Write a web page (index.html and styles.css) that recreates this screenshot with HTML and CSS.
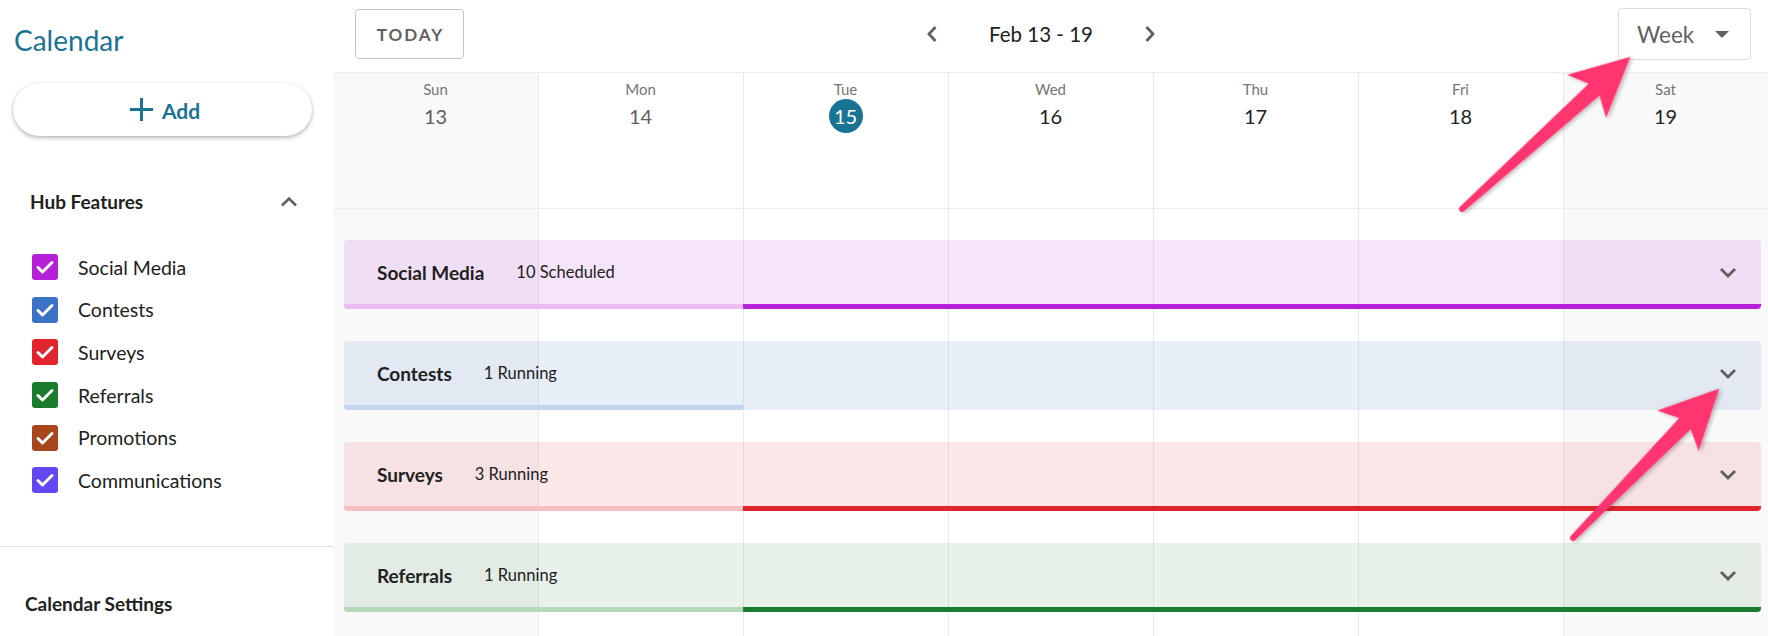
FILE: index.html
```html
<!DOCTYPE html>
<html lang="en">
<head>
<meta charset="utf-8">
<title>Calendar</title>
<link rel="stylesheet" href="styles.css">
</head>
<body>
<div class="app">
  <aside class="sidebar">
    <h1 class="side-title">Calendar</h1>
    <button class="add-btn">
      <svg class="plus" width="25" height="25" viewBox="0 0 25 25"><path d="M12.5 1v23M1 12.5h23" stroke="#1b7394" stroke-width="3" fill="none"/></svg>
      <span>Add</span>
    </button>
    <div class="hub-head">
      <span>Hub Features</span>
      <svg width="18" height="11" viewBox="0 0 18 11"><path d="M2 9.5L9 2.5l7 7" stroke="#616161" stroke-width="2.6" fill="none"/></svg>
    </div>
    <ul class="checklist">
      <li><span class="cb cb-social"><svg viewBox="0 0 26 26"><path d="M6 13.5l4.5 4.5 9.5-9.5" stroke="#fff" stroke-width="3" fill="none" stroke-linecap="round" stroke-linejoin="round"/></svg></span>Social Media</li>
      <li><span class="cb cb-contests"><svg viewBox="0 0 26 26"><path d="M6 13.5l4.5 4.5 9.5-9.5" stroke="#fff" stroke-width="3" fill="none" stroke-linecap="round" stroke-linejoin="round"/></svg></span>Contests</li>
      <li><span class="cb cb-surveys"><svg viewBox="0 0 26 26"><path d="M6 13.5l4.5 4.5 9.5-9.5" stroke="#fff" stroke-width="3" fill="none" stroke-linecap="round" stroke-linejoin="round"/></svg></span>Surveys</li>
      <li><span class="cb cb-referrals"><svg viewBox="0 0 26 26"><path d="M6 13.5l4.5 4.5 9.5-9.5" stroke="#fff" stroke-width="3" fill="none" stroke-linecap="round" stroke-linejoin="round"/></svg></span>Referrals</li>
      <li><span class="cb cb-promotions"><svg viewBox="0 0 26 26"><path d="M6 13.5l4.5 4.5 9.5-9.5" stroke="#fff" stroke-width="3" fill="none" stroke-linecap="round" stroke-linejoin="round"/></svg></span>Promotions</li>
      <li><span class="cb cb-comms"><svg viewBox="0 0 26 26"><path d="M6 13.5l4.5 4.5 9.5-9.5" stroke="#fff" stroke-width="3" fill="none" stroke-linecap="round" stroke-linejoin="round"/></svg></span>Communications</li>
    </ul>
    <div class="divider"></div>
    <div class="settings">Calendar Settings</div>
  </aside>

  <main class="main">
    <header class="topbar">
      <button class="today-btn">TODAY</button>
      <div class="date-nav">
        <svg width="14" height="18" viewBox="0 0 14 18"><path d="M10.5 2L4 9l6.5 7" stroke="#616161" stroke-width="2.8" fill="none"/></svg>
        <span class="range">Feb 13 - 19</span>
        <svg width="14" height="18" viewBox="0 0 14 18"><path d="M3.5 2L10 9l-6.5 7" stroke="#616161" stroke-width="2.8" fill="none"/></svg>
      </div>
      <div class="view-select">
        <span>Week</span>
        <svg width="14" height="7" viewBox="0 0 14 7"><path d="M0 0h14L7 7z" fill="#616161"/></svg>
      </div>
    </header>

    <section class="grid">
      <div class="col c1 weekend"></div>
      <div class="col c2"></div>
      <div class="col c3"></div>
      <div class="col c4"></div>
      <div class="col c5"></div>
      <div class="col c6"></div>
      <div class="col c7 weekend"></div>

      <div class="dayhead c1"><span class="dname">Sun</span><span class="dnum past-day">13</span></div>
      <div class="dayhead c2"><span class="dname">Mon</span><span class="dnum past-day">14</span></div>
      <div class="dayhead c3"><span class="dname">Tue</span><span class="dnum today">15</span></div>
      <div class="dayhead c4"><span class="dname">Wed</span><span class="dnum">16</span></div>
      <div class="dayhead c5"><span class="dname">Thu</span><span class="dnum">17</span></div>
      <div class="dayhead c6"><span class="dname">Fri</span><span class="dnum">18</span></div>
      <div class="dayhead c7"><span class="dname">Sat</span><span class="dnum">19</span></div>

      <div class="bar bar-social r2">
        <div class="bar-body"><span class="bar-title">Social Media</span><span class="bar-count">10 Scheduled</span><svg class="bar-chev" width="18" height="11" viewBox="0 0 18 11"><path d="M2 2l7 7 7-7" stroke="#5f5f5f" stroke-width="2.8" fill="none"/></svg></div>
        <div class="bar-line"><span class="seg-past"></span><span class="seg-now"></span></div>
      </div>
      <div class="bar bar-contests r3">
        <div class="bar-body"><span class="bar-title">Contests</span><span class="bar-count">1 Running</span><svg class="bar-chev" width="18" height="11" viewBox="0 0 18 11"><path d="M2 2l7 7 7-7" stroke="#5f5f5f" stroke-width="2.8" fill="none"/></svg></div>
        <div class="bar-line"><span class="seg-past"></span><span class="seg-now"></span></div>
      </div>
      <div class="bar bar-surveys r4">
        <div class="bar-body"><span class="bar-title">Surveys</span><span class="bar-count">3 Running</span><svg class="bar-chev" width="18" height="11" viewBox="0 0 18 11"><path d="M2 2l7 7 7-7" stroke="#5f5f5f" stroke-width="2.8" fill="none"/></svg></div>
        <div class="bar-line"><span class="seg-past"></span><span class="seg-now"></span></div>
      </div>
      <div class="bar bar-referrals r5">
        <div class="bar-body"><span class="bar-title">Referrals</span><span class="bar-count">1 Running</span><svg class="bar-chev" width="18" height="11" viewBox="0 0 18 11"><path d="M2 2l7 7 7-7" stroke="#5f5f5f" stroke-width="2.8" fill="none"/></svg></div>
        <div class="bar-line"><span class="seg-past"></span><span class="seg-now"></span></div>
      </div>
    </section>
  </main>
</div>

<svg class="annotations" width="1768" height="636" viewBox="0 0 1768 636">
  <defs>
    <filter id="sh" x="-20%" y="-20%" width="140%" height="140%">
      <feDropShadow dx="1" dy="2" stdDeviation="2" flood-color="#000" flood-opacity="0.3"/>
    </filter>
  </defs>
  <g transform="translate(1462 209) rotate(-42.1)" filter="url(#sh)">
    <path d="M0 -3 L178 -8 L168 -29 L227 0 L168 29 L178 8 L0 3 A3 3 0 0 1 0 -3 Z" fill="#ff346f"/>
  </g>
  <g transform="translate(1573 538) rotate(-45.6)" filter="url(#sh)">
    <path d="M0 -3 L160 -8 L150 -29 L209 0 L150 29 L160 8 L0 3 A3 3 0 0 1 0 -3 Z" fill="#ff346f"/>
  </g>
</svg>
</body>
</html>
```

FILE: styles.css
```css
* { box-sizing: border-box; }

html, body {
  margin: 0;
  padding: 0;
  width: 1768px;
  height: 636px;
  overflow: hidden;
  background: #fff;
  font-family: Lato, "Open Sans", Arial, sans-serif;
  color: #212121;
}

body { position: relative; }

.app {
  display: flex;
  height: 636px;
}

/* ---------- Sidebar ---------- */
.sidebar {
  width: 333px;
  flex: 0 0 333px;
  display: flex;
  flex-direction: column;
  background: #fff;
}

.side-title {
  margin: 22px 0 0 14px;
  font-size: 28px;
  line-height: 36px;
  font-weight: 400;
  color: #1b7394;
}

.add-btn {
  margin: 25px 0 0 13px;
  width: 299px;
  height: 53px;
  border: none;
  border-radius: 27px;
  background: #fff;
  box-shadow: 0 2px 4px rgba(0, 0, 0, 0.28), 0 0 1px rgba(0, 0, 0, 0.12);
  display: flex;
  align-items: center;
  justify-content: center;
  gap: 8px;
  font-family: inherit;
  font-size: 21px;
  font-weight: 700;
  color: #1b7394;
  padding: 0 0 0 4px;
}

.add-btn span { line-height: 1; margin-top: 1px; }

.hub-head {
  margin-top: 50px;
  height: 30px;
  padding: 0 35px 0 30px;
  display: flex;
  align-items: center;
  justify-content: space-between;
  font-size: 19px;
  font-weight: 700;
}

.checklist {
  list-style: none;
  margin: 30px 0 0 0;
  padding: 0 0 0 32px;
}

.checklist li {
  height: 42.6px;
  display: flex;
  align-items: center;
  gap: 20px;
  font-size: 19.5px;
}

.cb {
  width: 26px;
  height: 26px;
  border-radius: 3px;
  display: flex;
}
.cb svg { width: 26px; height: 26px; }

.cb-social { background: #b620d8; }
.cb-contests { background: #3a73c5; }
.cb-surveys { background: #e1242e; }
.cb-referrals { background: #197d2d; }
.cb-promotions { background: #a8461d; }
.cb-comms { background: #6446f5; }

.divider {
  margin-top: 44px;
  border-top: 1px solid #e0e0e0;
}

.settings {
  margin: 42px 0 0 25px;
  line-height: 30px;
  font-size: 19px;
  font-weight: 700;
}

/* ---------- Main ---------- */
.main {
  flex: 1;
  display: flex;
  flex-direction: column;
  min-width: 0;
}

.topbar {
  height: 73px;
  flex: 0 0 73px;
  border-bottom: 1px solid #ececec;
  display: flex;
  align-items: center;
  justify-content: space-between;
  padding: 0 17px 4px 22px;
}

.today-btn {
  width: 109px;
  height: 50px;
  border: 1px solid #c4c4c4;
  border-radius: 4px;
  background: #fff;
  font-family: inherit;
  font-size: 17px;
  font-weight: 700;
  letter-spacing: 2px;
  color: #616161;
  padding: 0 0 0 2px;
}

.date-nav {
  display: flex;
  align-items: center;
  gap: 50px;
}

.range {
  font-size: 20.5px;
  color: #212121;
}

.view-select {
  width: 133px;
  height: 52px;
  border: 1px solid #dcdcdc;
  border-radius: 4px;
  display: flex;
  align-items: center;
  justify-content: space-between;
  padding: 0 21px 0 18px;
  font-size: 22.5px;
  color: #616161;
}

/* ---------- Grid ---------- */
.grid {
  flex: 1;
  display: grid;
  grid-template-columns: repeat(7, 1fr);
  grid-template-rows: 136px repeat(4, 101px) 1fr;
}

.col {
  grid-row: 1 / -1;
  border-left: 1px solid #e9e9e9;
}
.col.c1 { border-left: none; }
.weekend { background: #f9f9f9; }

.c1 { grid-column: 1; }
.c2 { grid-column: 2; }
.c3 { grid-column: 3; }
.c4 { grid-column: 4; }
.c5 { grid-column: 5; }
.c6 { grid-column: 6; }
.c7 { grid-column: 7; }

.dayhead {
  grid-row: 1;
  border-bottom: 1px solid #ececec;
  display: flex;
  flex-direction: column;
  align-items: center;
  padding-top: 6px;
}

.dname {
  font-size: 15px;
  line-height: 20px;
  color: #757575;
}

.dnum {
  font-size: 20px;
  line-height: 34px;
  height: 34px;
  color: #212121;
}

.dnum.past-day { color: #5f5f5f; }

.dnum.today {
  width: 34px;
  border-radius: 50%;
  background: #1b7394;
  color: #fff;
  text-align: center;
}

.bar {
  grid-column: 1 / -1;
  margin: 31px 7px 0 11px;
  height: 69px;
  border-radius: 4px;
  overflow: hidden;
  display: flex;
  flex-direction: column;
}
.r2 { grid-row: 2; }
.r3 { grid-row: 3; }
.r4 { grid-row: 4; }
.r5 { grid-row: 5; }

.bar-body {
  flex: 1;
  display: flex;
  align-items: center;
  padding: 0 24px 0 33px;
}

.bar-title {
  font-size: 19px;
  font-weight: 700;
  color: #212121;
  margin-right: 32px;
}

.bar-count {
  font-size: 16.5px;
  color: #212121;
}

.bar-chev { margin-left: auto; }

.bar-line {
  height: 5px;
  display: flex;
}

.seg-past { width: calc((100% + 18px) * 2 / 7 - 11px); }
.seg-now { flex: 1; }

.bar-social { background: rgba(182, 32, 216, 0.12); }
.bar-social .seg-past { background: #ebbcf3; }
.bar-social .seg-now { background: #b620d8; }

.bar-contests { background: rgba(58, 115, 197, 0.117); }
.bar-contests .seg-past { background: #c2d5ec; }
.bar-contests .seg-now { background: transparent; }

.bar-surveys { background: rgba(225, 36, 46, 0.105); }
.bar-surveys .seg-past { background: #f6bfc1; }
.bar-surveys .seg-now { background: #e0242c; }

.bar-referrals { background: rgba(25, 125, 45, 0.1); }
.bar-referrals .seg-past { background: #b6d9bb; }
.bar-referrals .seg-now { background: #197d2d; }

/* ---------- Annotation arrows ---------- */
.annotations {
  position: absolute;
  left: 0;
  top: 0;
  pointer-events: none;
}
```
